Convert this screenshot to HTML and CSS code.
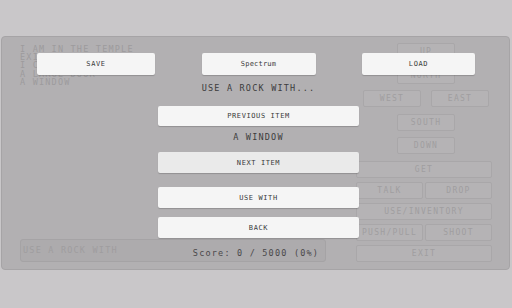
FILE: index.html
```html
<!DOCTYPE html>
<html lang="en">
<head>
    <meta charset="UTF-8">
    <meta name="viewport" content="width=device-width, initial-scale=1.0">
    <title>Temple</title>
    <link rel="stylesheet" href="styles.css">
</head>
<body>
    <div class="game">
        <div class="story">
            <div class="log">I AM IN THE TEMPLE<br>EXITS: UP NORTH<br>I CAN SEE:<br>A LARGE DOOR<br>A WINDOW</div>
            <div class="command">USE A ROCK WITH</div>
        </div>
        <div class="controls">
            <div class="compass">
                <div class="row"><button class="dir">UP</button></div>
                <div class="row"><button class="dir">NORTH</button></div>
                <div class="row pair"><button class="dir">WEST</button><button class="dir">EAST</button></div>
                <div class="row"><button class="dir">SOUTH</button></div>
                <div class="row"><button class="dir">DOWN</button></div>
            </div>
            <div class="actions">
                <button class="act full">GET</button>
                <button class="act">TALK</button>
                <button class="act">DROP</button>
                <button class="act full">USE/INVENTORY</button>
                <button class="act">PUSH/PULL</button>
                <button class="act">SHOOT</button>
                <button class="act full">EXIT</button>
            </div>
        </div>
    </div>

    <div class="menu">
        <div class="menu-top">
            <button class="menu-btn save">SAVE</button>
            <button class="menu-btn machine">Spectrum</button>
            <button class="menu-btn load">LOAD</button>
        </div>
        <div class="menu-list">
            <div class="menu-title">USE A ROCK WITH...</div>
            <button class="menu-btn item prev">PREVIOUS ITEM</button>
            <div class="menu-item">A WINDOW</div>
            <button class="menu-btn item next active">NEXT ITEM</button>
            <button class="menu-btn item use">USE WITH</button>
            <button class="menu-btn item back">BACK</button>
            <div class="score">Score: 0 / 5000 (0%)</div>
        </div>
    </div>
</body>
</html>
```

FILE: styles.css
```css
body {
    margin: 0;
    background: #c9c7c9;
    font-family: 'DejaVu Sans Mono', monospace;
    height: 308px;
    overflow: hidden;
    position: relative;
}
button {
    font-family: 'DejaVu Sans Mono', monospace;
    margin: 0;
    padding: 0;
    cursor: pointer;
}
.game {
    margin: 36px 2px 0 1px;
    height: 234px;
    box-sizing: border-box;
    background: #b2b0b2;
    border: 1px solid #a6a4a6;
    border-radius: 4px;
    display: flex;
    padding: 6px 17px 7px 18px;
    gap: 30px;
}
.story {
    width: 306px;
    display: flex;
    flex-direction: column;
}
.log {
    margin-top: 2px;
    font-size: 8.5px;
    line-height: 8.2px;
    letter-spacing: 1.2px;
    color: #9d9b9d;
}
.command {
    margin-top: auto;
    height: 23px;
    box-sizing: border-box;
    background: #adabad;
    border: 1px solid #a5a3a5;
    border-radius: 3px;
    padding-left: 2px;
    font-size: 8.5px;
    letter-spacing: 1.2px;
    line-height: 21px;
    color: #9f9d9f;
}
.controls {
    width: 136px;
}
.compass .row {
    display: flex;
    justify-content: center;
    padding-left: 4px;
    margin-bottom: 6.5px;
}
.compass .pair {
    gap: 10px;
    padding-left: 4px;
    padding-right: 0;
}
.dir, .act {
    height: 17px;
    background: #b5b3b5;
    border: 1px solid #a9a7a9;
    border-radius: 2px;
    font-size: 8px;
    letter-spacing: 1.3px;
    color: #a09ea0;
}
.dir {
    width: 58px;
}
.actions {
    margin-top: 1px;
    display: grid;
    grid-template-columns: 1fr 1fr;
    gap: 4px 2px;
}
.act.full {
    grid-column: span 2;
}
.menu {
    position: absolute;
    top: 0;
    left: 0;
    width: 512px;
    padding-top: 53px;
}
.menu-top {
    display: flex;
    justify-content: space-between;
    padding: 0 37px;
}
.menu-btn {
    height: 22px;
    background: #f5f5f5;
    border: none;
    border-radius: 2px;
    box-shadow: 0 1px 1px rgba(0, 0, 0, 0.18);
    font-size: 7px;
    letter-spacing: 0.6px;
    color: #3a3a3a;
}
.save { width: 118px; }
.machine { width: 114px; letter-spacing: 0.2px; }
.load { width: 113px; }
.menu-list {
    margin-left: 158px;
    width: 201px;
    display: flex;
    flex-direction: column;
    text-align: center;
}
.menu-title, .menu-item, .score {
    font-size: 8.5px;
    letter-spacing: 1.2px;
    line-height: 10px;
    color: #3c3c3c;
}
.menu-title { margin-top: 8px; }
.item { width: 201px; }
.prev { margin-top: 13px; height: 20px; }
.menu-item { margin-top: 6px; }
.next { margin-top: 10px; height: 21px; }
.active { background: #eaeaea; }
.use { margin-top: 14px; height: 21px; }
.back { margin-top: 9px; height: 21px; }
.score {
    margin-top: 10px;
    color: #4a484a;
    padding-right: 5px;
}
```
